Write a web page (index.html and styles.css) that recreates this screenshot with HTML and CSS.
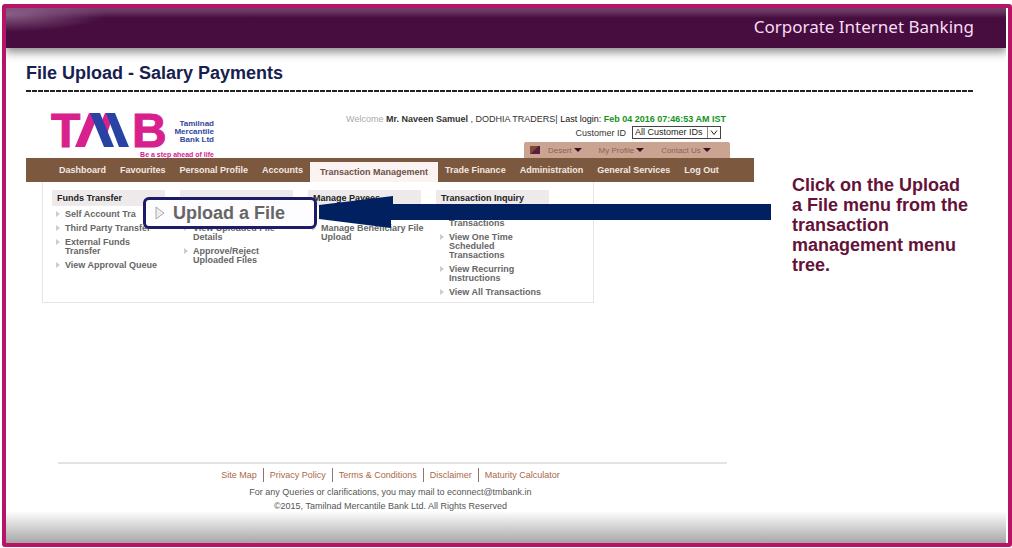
FILE: index.html
```html
<!DOCTYPE html>
<html lang="en">
<head>
<meta charset="utf-8">
<title>Corporate Internet Banking</title>
<link rel="stylesheet" href="styles.css">
</head>
<body>
<div class="frame">
  <header class="banner">Corporate Internet Banking</header>
  <h1 class="title">File Upload - Salary Payments</h1>
  <main class="content">
    <section class="bank">
      <div class="bank-top">
        <svg class="logo" viewBox="0 0 164 47" role="img" aria-label="Tamilnad Mercantile Bank">
          <text class="logo-letter" x="0" y="36">T</text>
          <path class="logo-pink" d="M24 36 L38 2 H48 L34 36Z M49 14 L54 2 H63 L56 23Z"/>
          <path class="logo-blue" d="M39 2 H49 L63 36 H53Z M55 2 H64 L78 36 H68Z"/>
          <text class="logo-letter" x="81" y="36">B</text>
          <text class="logo-name" x="163" y="15">Tamilnad</text>
          <text class="logo-name" x="163" y="23">Mercantile</text>
          <text class="logo-name" x="163" y="31">Bank Ltd</text>
          <text class="logo-tag" x="163" y="46">Be a step ahead of life</text>
        </svg>
        <div class="account">
          <p class="welcome"><span class="faint">Welcome</span> <b>Mr. Naveen Samuel</b> , DODHIA TRADERS| <span class="black">Last login:</span> <b class="login">Feb 04 2016 07:46:53 AM IST</b></p>
          <div class="customer">
            <label for="cid">Customer ID</label>
            <span class="select-wrap"><select id="cid"><option>All Customer IDs</option></select><svg class="chev" viewBox="0 0 12 10"><path d="M3 3 L6 7 L9 3"/></svg></span>
          </div>
          <div class="tools">
            <i class="swatch"></i>
            <button type="button">Desert<span class="caret"></span></button>
            <button type="button">My Profile<span class="caret"></span></button>
            <button type="button">Contact Us<span class="caret"></span></button>
          </div>
        </div>
      </div>
      <nav class="nav">
        <a href="#">Dashboard</a><a href="#">Favourites</a><a href="#">Personal Profile</a><a href="#">Accounts</a><a href="#" class="active">Transaction Management</a><a href="#">Trade Finance</a><a href="#">Administration</a><a href="#">General Services</a><a href="#">Log Out</a>
      </nav>
      <div class="menu">
        <div class="col">
          <h2>Funds Transfer</h2>
          <ul><li>Self Account Tra</li><li>Third Party Transfer</li><li>External Funds<br>Transfer</li><li>View Approval Queue</li></ul>
        </div>
        <div class="col">
          <h2>&nbsp;</h2>
          <ul><li>&nbsp;</li><li>View Uploaded File<br>Details</li><li>Approve/Reject<br>Uploaded Files</li></ul>
        </div>
        <div class="col">
          <h2>Manage Payees</h2>
          <ul><li>&nbsp;</li><li>Manage Beneficiary File<br>Upload</li></ul>
        </div>
        <div class="col">
          <h2>Transaction Inquiry</h2>
          <ul><li>&nbsp;<br>Transactions</li><li>View One Time<br>Scheduled<br>Transactions</li><li>View Recurring<br>Instructions</li><li>View All Transactions</li></ul>
        </div>
        <div class="callout"><svg viewBox="0 0 10 14"><path d="M1 1 L9 7 L1 13Z"/></svg>Upload a File</div>
        <svg class="arrow" viewBox="0 0 452 32"><path d="M0 9 L74 0 V8 H452 V24 H72 V32 L0 23Z"/></svg>
      </div>
    </section>
    <p class="note">Click on the Upload a File menu from the transaction management menu tree.</p>
  </main>
  <footer class="footer">
    <div class="footer-in">
      <div class="links"><a href="#">Site Map</a><a href="#">Privacy Policy</a><a href="#">Terms &amp; Conditions</a><a href="#">Disclaimer</a><a href="#">Maturity Calculator</a></div>
      <p>For any Queries or clarifications, you may mail to econnect@tmbank.in</p>
      <p>©2015, Tamilnad Mercantile Bank Ltd. All Rights Reserved</p>
    </div>
  </footer>
</div>
</body>
</html>
```
FILE: styles.css
```css
* { box-sizing: border-box; }
body { margin: 0; padding: 4px 0 1px 2px; min-height: 100vh; display: flex; background: #fff; font-family: "Liberation Sans", Arial, sans-serif; }
p, h1, h2, ul { margin: 0; padding: 0; }
a { text-decoration: none; color: inherit; }
.frame { flex: 1; display: flex; flex-direction: column; border: 4px solid #b81466; border-radius: 3px; padding-right: 2px; }
.banner { height: 40px; padding: 0 32px; text-align: right; color: #f6dcf4; font: 17px/38px "Noto Sans", "Open Sans", sans-serif; background: radial-gradient(ellipse 100px 18px at 0 6px, #8a6087, transparent), linear-gradient(#70416b, #65345f 4px, #460d3e 10px, #460d3e); box-shadow: 0 3px 9px 1px #888; clip-path: inset(0 0 -20px 0); }
.title { margin: 14px 32px 0 20px; padding-bottom: 8px; font-size: 18px; line-height: 22px; color: #17214f; background: repeating-linear-gradient(90deg, #222 0 5px, transparent 5px 6px) bottom / 100% 2px no-repeat; }
.content { display: grid; grid-template-columns: 4fr 1fr; gap: 38px; padding: 15px 32px 0 20px; }
.bank { min-width: 0; }
.bank-top { display: flex; justify-content: space-between; align-items: flex-end; padding: 0 24px 0 25px; height: 51px; }
.logo { width: 164px; height: 47px; overflow: visible; }
.logo-letter { font: bold 48px "Liberation Sans", sans-serif; fill: #d8218c; stroke: #d8218c; }
.logo-pink { fill: #d8218c; }
.logo-blue { fill: #2943a4; }
.logo-name { font: bold 8px "Liberation Sans", sans-serif; fill: #33479b; text-anchor: end; }
.logo-tag { font: bold 7px "Liberation Sans", sans-serif; fill: #d8218c; text-anchor: end; }
.account { display: flex; flex-direction: column; align-items: flex-end; color: #333; font-size: 9px; }
.welcome { line-height: 10px; padding-right: 4px; white-space: nowrap; margin-bottom: 2px; }
.faint { color: #aaa; }
.black { color: #111; }
.login { color: #16931d; }
.customer { display: flex; align-items: center; gap: 6px; padding-right: 9px; margin-bottom: 3px; }
.select-wrap { position: relative; display: flex; }
select { appearance: none; width: 89px; height: 13px; margin: 0; padding: 0 0 0 2px; border: 1px solid #444; border-radius: 0; background: #fff; color: #222; font: 9px/11px "Liberation Sans", sans-serif; }
.chev { position: absolute; right: 1px; top: 1px; width: 13px; height: 11px; border-left: 1px solid #888; fill: none; stroke: #222; pointer-events: none; }
.tools { display: flex; align-items: center; gap: 17px; width: 206px; height: 16px; padding-left: 6px; background: #cba391; border-radius: 2px 2px 0 0; }
.tools button { display: flex; align-items: center; gap: 2px; border: 0; padding: 0; background: none; color: #896356; font: 8px "Liberation Sans", sans-serif; }
.swatch { width: 10px; height: 8px; margin-right: -9px; background: linear-gradient(135deg, #84472f 50%, #55203d 50%); }
.caret { border: 4px solid transparent; border-top-color: #331420; border-bottom: 0; }
.nav { display: flex; align-items: center; height: 24px; padding-left: 26px; background: #7c583f; color: #f3e9e2; font: bold 9px/20px "Liberation Sans", sans-serif; white-space: nowrap; }
.nav a { padding: 0 7px; }
.nav .active { align-self: flex-end; padding: 0 10px; color: #6b5148; background: #fbf3f2; }
.menu { position: relative; display: flex; gap: 15px; margin: 0 160px 0 16px; height: 121px; padding: 8px 9px; border: 1px solid #e6e2e6; border-top: 0; }
.col { width: 113px; }
.col h2 { height: 16px; padding-left: 5px; background: #eeeaec; color: #222; font-size: 9px; line-height: 16px; }
.col ul { list-style: none; margin-top: 4px; color: #666; font: bold 9px/9px "Liberation Sans", sans-serif; white-space: nowrap; }
.col li { position: relative; padding-left: 13px; margin-bottom: 5px; }
.col li::before { content: ""; position: absolute; left: 4px; top: 1px; border: 3px solid transparent; border-left: 4px solid #ccc; border-right: 0; }
.callout { position: absolute; left: 100px; top: 15px; width: 174px; height: 32px; display: flex; align-items: center; gap: 8px; padding-left: 9px; border: 3px solid #1d1c66; border-radius: 6px; background: #fdfcfe; color: #666; font-weight: bold; font-size: 18px; white-space: nowrap; }
.callout svg { width: 10px; height: 14px; fill: #eee; stroke: #aaa; }
.arrow { position: absolute; left: 276px; top: 14px; width: 452px; height: 32px; fill: #00205f; }
.note { padding-top: 68px; color: #641238; font-weight: bold; font-size: 18px; line-height: 20px; }
.footer { margin-top: auto; padding: 0 279px 30px 52px; background: linear-gradient(#a6a6a600, #a6a6a6) bottom / 100% 32px no-repeat; }
.footer-in { padding: 4px 4px 0 0; border-top: 2px solid #e6e2e4; text-align: center; color: #555; font-size: 9px; line-height: 14px; }
.links { display: flex; justify-content: center; color: #ad6848; margin-bottom: 3px; }
.links a { padding: 0 6px; }
.links a + a { border-left: 1px solid #8c7770; }
```
